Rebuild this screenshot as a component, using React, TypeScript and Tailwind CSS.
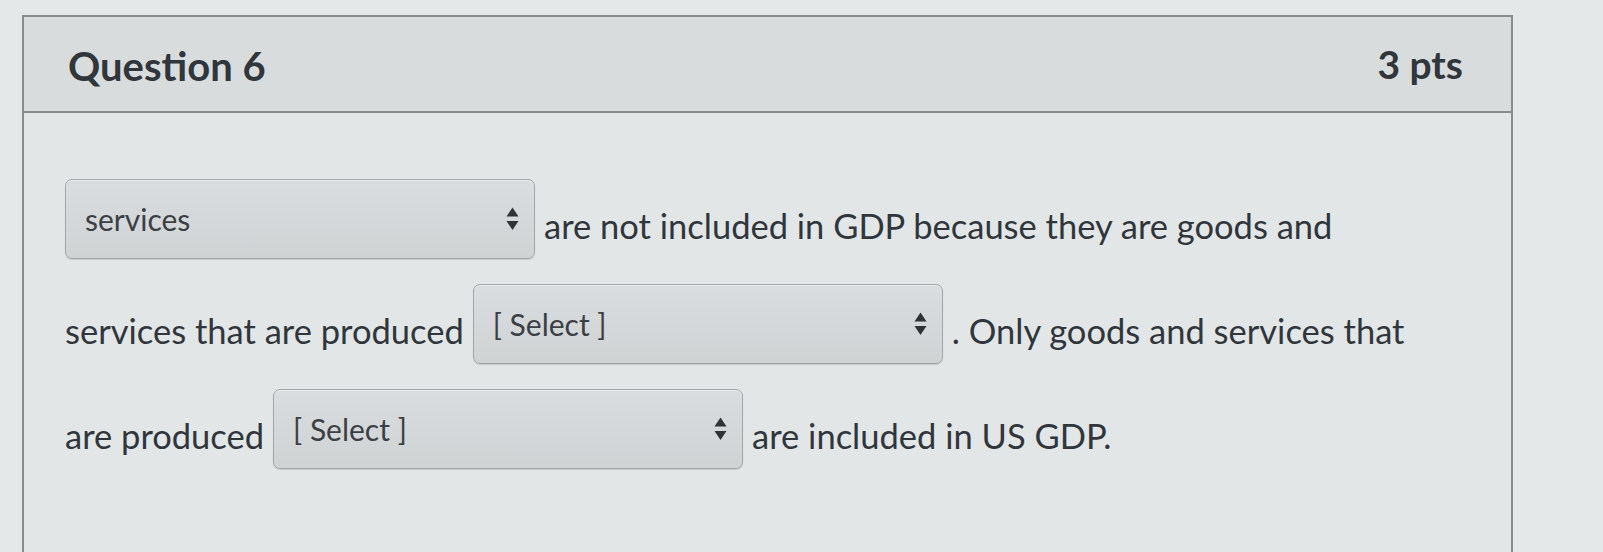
import React from "react"

type Part = { kind: "text"; value: string } | { kind: "select"; value: string }

const rows: Part[][] = [
  [
    { kind: "select", value: "services" },
    { kind: "text", value: "are not included in GDP because they are goods and" },
  ],
  [
    { kind: "text", value: "services that are produced" },
    { kind: "select", value: "[ Select ]" },
    { kind: "text", value: ". Only goods and services that" },
  ],
  [
    { kind: "text", value: "are produced" },
    { kind: "select", value: "[ Select ]" },
    { kind: "text", value: "are included in US GDP." },
  ],
]

function UpDownArrows() {
  return (
    <svg width="13" height="24" viewBox="0 0 13 24" className="shrink-0">
      <path d="M6.5 0.5 L12.5 9.5 L0.5 9.5 Z" fill="#2f3336" />
      <path d="M0.5 14 L12.5 14 L6.5 23 Z" fill="#2f3336" />
    </svg>
  )
}

function FakeSelect({ label }: { label: string }) {
  return (
    <div className="flex h-[80px] w-[470px] shrink-0 items-center justify-between rounded-[7px] border border-[#a2a6a8] bg-gradient-to-b from-[#dadddf] to-[#cfd3d4] pl-[19px] pr-[15px] shadow-[inset_0_1px_0_rgba(255,255,255,0.45),0_1px_1px_rgba(0,0,0,0.12)]">
      <span className="text-[30px] leading-[36px] text-[#3b4044]">{label}</span>
      <UpDownArrows />
    </div>
  )
}

export default function App() {
  return (
    <div className="h-[552px] w-full overflow-hidden bg-[#e4e8e9] pt-[15px] pl-[22px] font-[family-name:Lato,sans-serif] text-[#30363b]">
      <div className="h-[600px] w-[1491px] border-2 border-[#878c8f] bg-[#e2e6e7]">
        <div className="flex h-[96px] items-center justify-between border-b-2 border-[#878c8f] bg-[#d9dcdd] pl-[44px] pr-[48px] pt-[4px]">
          <h2 className="text-[40px] font-bold leading-[48px]">Question 6</h2>
          <span className="-mt-[4px] text-[39px] font-bold leading-[48px]">3 pts</span>
        </div>
        <div className="flex flex-col gap-[25px] pl-[41px] pt-[66px]">
          {rows.map((row, i) => (
            <div key={i} className="flex items-end gap-[9px]">
              {row.map((part, j) =>
                part.kind === "select" ? (
                  <FakeSelect key={j} label={part.value} />
                ) : (
                  <span key={j} className="mb-[12px] whitespace-nowrap text-[34.5px] leading-[42px]">
                    {part.value}
                  </span>
                )
              )}
            </div>
          ))}
        </div>
      </div>
    </div>
  )
}
